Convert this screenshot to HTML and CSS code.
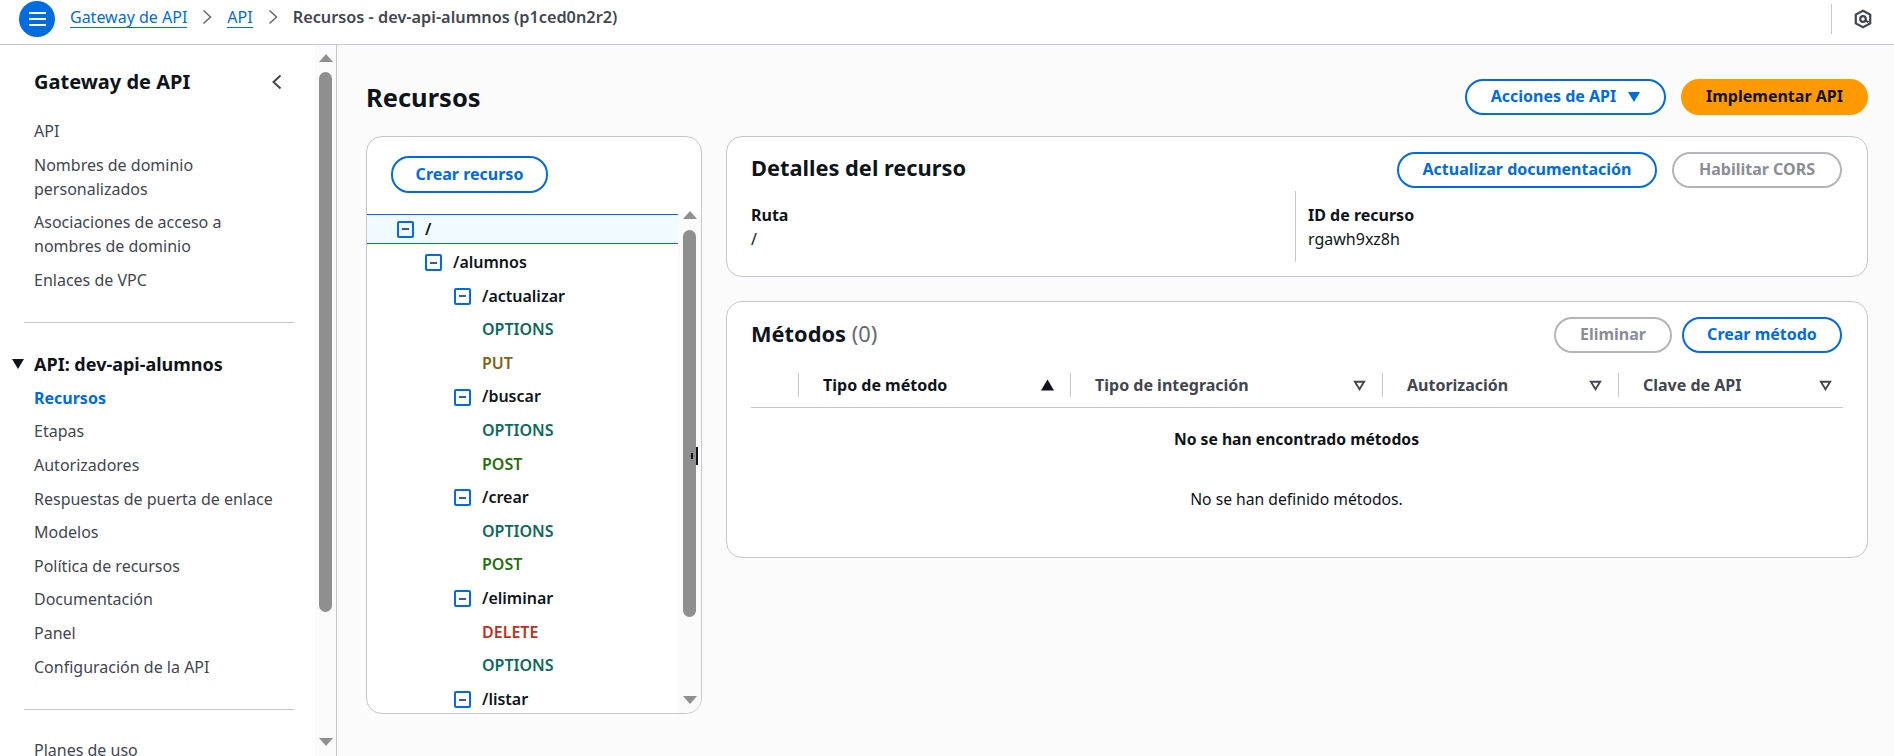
FILE: index.html
```html
<!DOCTYPE html>
<html lang="es">
<head>
    <meta charset="UTF-8">
    <title>Recursos - dev-api-alumnos</title>
    <link rel="stylesheet" href="styles.css">
</head>
<body>
    <!-- Top breadcrumb bar -->
    <header class="topbar">
        <button class="menu-btn"><span></span><span></span><span></span></button>
        <nav class="crumbs">
            <a href="#">Gateway de API</a>
            <svg class="crumb-sep" viewBox="0 0 10 16"><path d="M1.5 1.5 8.5 8l-7 6.5"/></svg>
            <a href="#">API</a>
            <svg class="crumb-sep" viewBox="0 0 10 16"><path d="M1.5 1.5 8.5 8l-7 6.5"/></svg>
            <span class="crumb-current">Recursos - dev-api-alumnos (p1ced0n2r2)</span>
        </nav>
        <div class="topbar-tools">
            <svg class="hex-icon" viewBox="0 0 16 18"><path d="M8 1.5 14.5 5v8L8 16.500 1.500 13V5z"/><circle cx="8" cy="9" r="2.500"/><path d="M9.500 10 13 12"/></svg>
        </div>
    </header>

    <div class="layout">
        <!-- Side navigation -->
        <aside class="sidebar">
            <div class="side-content">
                <div class="side-title">
                    <span>Gateway de API</span>
                    <svg class="side-close" viewBox="0 0 10 16"><path d="M8.500 1.500 1.500 8l7 6.500"/></svg>
                </div>
                <ul class="side-list">
                    <li>API</li>
                    <li>Nombres de dominio personalizados</li>
                    <li>Asociaciones de acceso a nombres de dominio</li>
                    <li>Enlaces de VPC</li>
                </ul>
                <hr class="side-rule">
                <div class="side-section"><i class="side-caret"></i>API: dev-api-alumnos</div>
                <ul class="side-list">
                    <li class="active">Recursos</li>
                    <li>Etapas</li>
                    <li>Autorizadores</li>
                    <li>Respuestas de puerta de enlace</li>
                    <li>Modelos</li>
                    <li>Política de recursos</li>
                    <li>Documentación</li>
                    <li>Panel</li>
                    <li>Configuración de la API</li>
                </ul>
                <hr class="side-rule side-rule-low">
                <ul class="side-list">
                    <li>Planes de uso</li>
                </ul>
            </div>
            <div class="scrollbar side-scroll">
                <i class="arrow-up"></i>
                <div class="thumb"></div>
                <i class="arrow-down"></i>
            </div>
        </aside>

        <main class="main">
            <div class="page-head">
                <h1>Recursos</h1>
                <div class="btn-row">
                    <button class="btn btn-actions">Acciones de API <i class="btn-caret"></i></button>
                    <button class="btn btn-primary">Implementar API</button>
                </div>
            </div>

            <div class="columns">
                <!-- Resource tree -->
                <section class="tree-panel">
                    <div class="tree-top">
                        <button class="btn btn-create">Crear recurso</button>
                    </div>
                    <div class="tree-wrap">
                        <ul class="tree">
                            <li class="node selected"><i class="toggle"></i>/</li>
                            <li class="node lvl-1"><i class="toggle"></i>/alumnos</li>
                            <li class="node lvl-2"><i class="toggle"></i>/actualizar</li>
                            <li class="method options">OPTIONS</li>
                            <li class="method put">PUT</li>
                            <li class="node lvl-2"><i class="toggle"></i>/buscar</li>
                            <li class="method options">OPTIONS</li>
                            <li class="method post">POST</li>
                            <li class="node lvl-2"><i class="toggle"></i>/crear</li>
                            <li class="method options">OPTIONS</li>
                            <li class="method post">POST</li>
                            <li class="node lvl-2"><i class="toggle"></i>/eliminar</li>
                            <li class="method delete">DELETE</li>
                            <li class="method options">OPTIONS</li>
                            <li class="node lvl-2"><i class="toggle"></i>/listar</li>
                        </ul>
                        <div class="scrollbar tree-scroll">
                            <i class="arrow-up"></i>
                            <div class="thumb"></div>
                            <i class="arrow-down"></i>
                        </div>
                    </div>
                </section>

                <div class="cards">
                    <!-- Resource details -->
                    <section class="card details">
                        <div class="card-head">
                            <h2>Detalles del recurso</h2>
                            <div class="btn-row">
                                <button class="btn btn-docs">Actualizar documentación</button>
                                <button class="btn btn-cors" disabled>Habilitar CORS</button>
                            </div>
                        </div>
                        <div class="detail-grid">
                            <div class="detail-item">
                                <b>Ruta</b>
                                <span>/</span>
                            </div>
                            <div class="detail-item">
                                <b>ID de recurso</b>
                                <span>rgawh9xz8h</span>
                            </div>
                        </div>
                    </section>

                    <!-- Methods table -->
                    <section class="card methods">
                        <div class="card-head">
                            <h2>Métodos <span class="count">(0)</span></h2>
                            <div class="btn-row btn-row-tight">
                                <button class="btn btn-delete" disabled>Eliminar</button>
                                <button class="btn btn-method">Crear método</button>
                            </div>
                        </div>
                        <div class="table-head">
                            <div class="th"></div>
                            <div class="th sorted">Tipo de método
                                <svg class="sort" viewBox="0 0 14 12"><path class="fill" d="M7 0 14 12H0z"/></svg>
                            </div>
                            <div class="th">Tipo de integración
                                <svg class="sort" viewBox="0 0 14 12"><path d="M2 2.500h10L7 10.500z"/></svg>
                            </div>
                            <div class="th">Autorización
                                <svg class="sort" viewBox="0 0 14 12"><path d="M2 2.500h10L7 10.500z"/></svg>
                            </div>
                            <div class="th">Clave de API
                                <svg class="sort" viewBox="0 0 14 12"><path d="M2 2.500h10L7 10.500z"/></svg>
                            </div>
                        </div>
                        <div class="empty">
                            <b>No se han encontrado métodos</b>
                            <p>No se han definido métodos.</p>
                        </div>
                    </section>
                </div>
            </div>
        </main>
    </div>

    <!-- Mouse pointer caught in the screenshot -->
    <div class="pointer"></div>
</body>
</html>
```

FILE: styles.css
```css
/* General styles */
* {
    box-sizing: border-box;
}

html, body {
    height: 756px;
    margin: 0;
    overflow: hidden;
}

body {
    font-family: "Noto Sans", "Open Sans", sans-serif;
    font-size: 16px;
    color: #0f141a;
    background: #fbfbfc;
}

ul {
    list-style: none;
    margin: 0;
    padding: 0;
}

/* Top bar */
.topbar {
    height: 45px;
    display: flex;
    align-items: flex-start;
    background: #fff;
    border-bottom: 1px solid #c6c6cd;
    padding: 1px 0 0 19px;
}

.menu-btn {
    width: 36px;
    height: 36px;
    border: 0;
    border-radius: 50%;
    background: #006ce0;
    display: flex;
    flex-direction: column;
    align-items: center;
    justify-content: center;
    gap: 4px;
    padding: 0;
}

.menu-btn span {
    width: 17px;
    height: 2px;
    background: #fff;
}

.crumbs {
    display: flex;
    align-items: center;
    height: 32px;
    margin-left: 15px;
}

.crumbs a {
    color: #006ce0;
    text-decoration: none;
    border-bottom: 1px solid #006ce0;
    line-height: 20px;
    margin-top: 1px;
}

.crumb-sep {
    width: 10px;
    height: 16px;
    margin: 0 15px;
    fill: none;
    stroke: #656871;
    stroke-width: 1.500;
}

.crumb-current {
    color: #424650;
    font-weight: 600;
    font-size: 16.300px;
}

.topbar-tools {
    margin-left: auto;
    height: 30px;
    margin-top: 3px;
    width: 63px;
    border-left: 1px solid #c6c6cd;
    display: flex;
    justify-content: center;
    align-items: center;
}

.hex-icon {
    width: 18px;
    height: 20px;
    fill: none;
    stroke: #424650;
    stroke-width: 2;
}

/* Page layout */
.layout {
    display: flex;
    height: 711px;
}

/* Sidebar */
.sidebar {
    width: 337px;
    display: flex;
    background: #fff;
    border-right: 1px solid #c6c6cd;
    overflow: hidden;
}

.side-content {
    width: 315px;
    padding: 23px 0 0 24px;
    flex-shrink: 0;
}

.side-title {
    display: flex;
    justify-content: space-between;
    align-items: center;
    padding: 0 33px 0 10px;
    font-size: 20px;
    font-weight: 700;
    line-height: 28px;
    margin-bottom: 23px;
}

.side-close {
    width: 10px;
    height: 16px;
    fill: none;
    stroke: #424650;
    stroke-width: 2;
}

.side-list {
    padding-left: 10px;
    padding-right: 40px;
}

.side-list li {
    line-height: 24px;
    margin-bottom: 9.6px;
    color: #424650;
}

.side-list li.active {
    color: #006ce0;
    font-weight: 700;
}

.side-rule {
    border: 0;
    border-top: 1px solid #c6c6cd;
    width: 270px;
    margin: 30px 0 29px;
}

.side-rule-low {
    margin: 30px 0 28px;
}

.side-section {
    display: flex;
    align-items: center;
    font-size: 18px;
    font-weight: 700;
    line-height: 24px;
    margin: 0 0 10px -12px;
}

.side-caret {
    width: 0;
    height: 0;
    border-left: 6px solid transparent;
    border-right: 6px solid transparent;
    border-top: 10px solid #0f141a;
    margin-right: 10px;
}

/* Fake scrollbars */
.scrollbar {
    display: flex;
    flex-direction: column;
    align-items: center;
    background: #fafafa;
}

.thumb {
    width: 13px;
    background: #8f8f8f;
    border-radius: 7px;
}

.arrow-up, .arrow-down {
    width: 0;
    height: 0;
    border-left: 7px solid transparent;
    border-right: 7px solid transparent;
    flex-shrink: 0;
}

.arrow-up {
    border-bottom: 8px solid #8f8f8f;
}

.arrow-down {
    border-top: 8px solid #8f8f8f;
}

.side-scroll {
    width: 21px;
    padding-top: 9px;
}

.side-scroll .thumb {
    height: 540px;
    margin: 10px 0 127px;
}

.side-scroll .arrow-down {
    margin-top: -1px;
}

/* Main area */
.main {
    flex: 1;
    padding: 34px 26px 0 29px;
    min-width: 0;
}

.page-head {
    display: flex;
    justify-content: space-between;
    align-items: center;
    height: 36px;
    margin-bottom: 21px;
}

h1 {
    margin: 0;
    font-size: 25.500px;
    font-weight: 700;
    line-height: 36px;
}

h2 {
    margin: 0;
    font-size: 21.800px;
    font-weight: 700;
    line-height: 32px;
    padding-bottom: 4px;
}

.methods h2 {
    padding-bottom: 2px;
}

.count {
    font-weight: 400;
    color: #656871;
}

.btn-row {
    display: flex;
    gap: 15px;
}

.btn-row-tight {
    gap: 10px;
}

.btn {
    height: 36px;
    border: 2px solid #006ce0;
    border-radius: 18px;
    background: #fff;
    color: #006ce0;
    font-family: inherit;
    font-size: 16px;
    font-weight: 700;
    padding: 0 0 3px;
    flex-shrink: 0;
}

.btn-actions {
    width: 201px;
}

.btn-caret {
    display: inline-block;
    width: 0;
    height: 0;
    border-left: 6.500px solid transparent;
    border-right: 6.500px solid transparent;
    border-top: 10px solid #006ce0;
    margin-left: 8px;
}

.btn-primary {
    width: 187px;
    background: #ff9900;
    border-color: #ff9900;
    color: #0f141a;
}

.btn-create {
    width: 157px;
    height: 37px;
    padding-bottom: 1px;
}

.btn-docs {
    width: 260px;
}

.btn-cors {
    width: 170px;
}

.btn-delete {
    width: 118px;
}

.btn-method {
    width: 160px;
}

.btn:disabled {
    border-color: #b4b4bb;
    color: #8c8c94;
}

.columns {
    display: flex;
    gap: 24px;
    align-items: flex-start;
}

/* Resource tree */
.tree-panel {
    width: 336px;
    height: 578px;
    flex-shrink: 0;
    background: #fff;
    border: 1px solid #c6c6cd;
    border-radius: 16px;
    overflow: hidden;
    display: flex;
    flex-direction: column;
}

.tree-top {
    height: 77px;
    padding: 19px 0 0 24px;
    flex-shrink: 0;
}

.tree-wrap {
    display: flex;
    flex: 1;
    min-height: 0;
}

.tree {
    flex: 1;
    overflow: hidden;
    font-weight: 600;
}

.node, .method {
    height: 33.600px;
    line-height: 33.600px;
    white-space: nowrap;
}

.node {
    display: flex;
    align-items: center;
    color: #0f141a;
}

.selected {
    height: 30px;
    line-height: 28px;
    margin-bottom: 2px;
    background: #f0fbff;
    border-top: 1px solid #006ce0;
    border-bottom: 1px solid #006ce0;
    padding-left: 30px;
}

.lvl-1 {
    padding-left: 58px;
}

.lvl-2 {
    padding-left: 87px;
}

.toggle {
    width: 17px;
    height: 17px;
    border: 2px solid #006ce0;
    border-radius: 2px;
    margin-right: 11px;
    flex-shrink: 0;
    display: flex;
    align-items: center;
    justify-content: center;
}

.toggle::before {
    content: "";
    width: 7px;
    height: 2px;
    background: #2f5f9e;
}

.method {
    padding-left: 115px;
}

.options {
    color: #0a6b5b;
}

.put {
    color: #7d6418;
}

.post {
    color: #24700c;
}

.delete {
    color: #b9341a;
}

.tree-scroll {
    width: 23px;
}

.tree-scroll .arrow-up {
    margin-top: -3px;
}

.tree-scroll .thumb {
    height: 387px;
    margin: 11px 0 79px;
}

/* Right hand cards */
.cards {
    flex: 1;
    display: flex;
    flex-direction: column;
    gap: 24px;
    min-width: 0;
}

.card {
    background: #fff;
    border: 1px solid #c6c6cd;
    border-radius: 16px;
    padding: 15px 25px 0 24px;
}

.card-head {
    display: flex;
    justify-content: space-between;
    align-items: center;
}

.details {
    height: 141px;
}

.detail-grid {
    display: grid;
    grid-template-columns: 544px 1fr;
    margin-top: 3px;
}

.detail-item {
    height: 71px;
    display: flex;
    flex-direction: column;
    line-height: 24px;
    padding-top: 12px;
}

.detail-item b {
    font-weight: 700;
}

.detail-item + .detail-item {
    border-left: 1px solid #c6c6cd;
    padding-left: 12px;
}

.methods {
    height: 257px;
}

.table-head {
    display: grid;
    grid-template-columns: 47px 272px 312px 236px 224px;
    height: 55px;
    padding-top: 20px;
    margin-right: -1px;
    border-bottom: 1px solid #c6c6cd;
}

.th {
    height: 24px;
    border-left: 1px solid #c6c6cd;
    padding: 1px 16px 1px 24px;
    display: flex;
    justify-content: space-between;
    align-items: center;
    color: #424650;
    font-weight: 700;
    white-space: nowrap;
}

.th:first-child {
    border-left: 0;
}

.th:last-child {
    padding-right: 10px;
}

.sorted {
    color: #0f141a;
}

.sort {
    width: 13px;
    height: 12px;
    fill: none;
    stroke: #424650;
    stroke-width: 2;
}

.sort .fill {
    fill: #0f141a;
    stroke: none;
}

.empty {
    text-align: center;
    padding-top: 19px;
    line-height: 24px;
    font-size: 15.700px;
}

.empty b {
    font-weight: 700;
}

.empty p {
    margin: 36px 0 0;
}

/* Mouse pointer */
.pointer {
    position: absolute;
    left: 696px;
    top: 447px;
    width: 2px;
    height: 18px;
    background: #0f141a;
}

.pointer::before {
    content: "";
    position: absolute;
    left: -5px;
    top: 6px;
    width: 2px;
    height: 6px;
    background: #0f141a;
}
```
